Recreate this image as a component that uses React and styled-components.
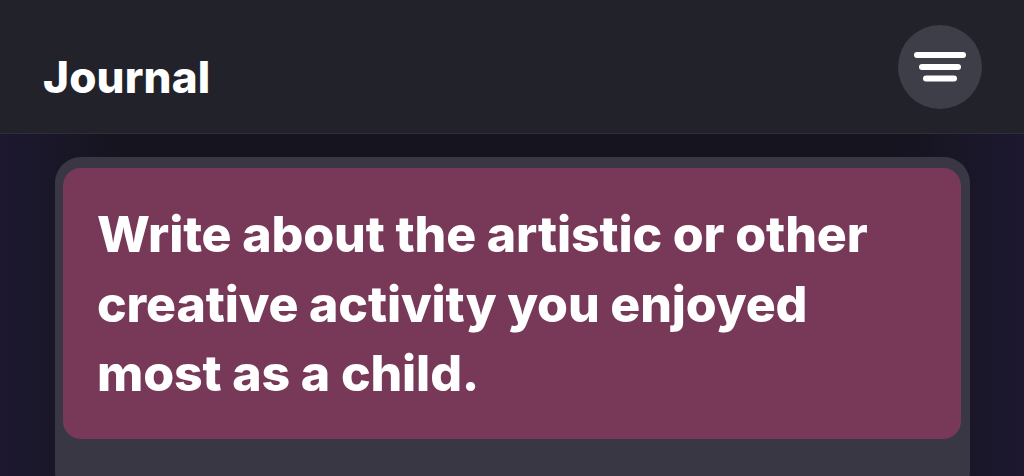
import React from 'react';
import styled, { createGlobalStyle } from 'styled-components';

const GlobalStyle = createGlobalStyle`
  html, body {
    margin: 0;
    padding: 0;
    height: 100%;
    background: #16141f;
    font-family: Inter, 'Noto Sans', 'Liberation Sans', sans-serif;
    -webkit-font-smoothing: antialiased;
  }
  #root {
    height: 100%;
  }
`;

const Screen = styled.div`
  height: 476px;
  overflow: hidden;
  display: flex;
  flex-direction: column;
  background: linear-gradient(
    90deg,
    #1d1830 0%,
    #16141f 12%,
    #16141f 88%,
    #1d1830 100%
  );
`;

const Header = styled.header`
  height: 134px;
  flex-shrink: 0;
  box-sizing: border-box;
  display: flex;
  align-items: center;
  justify-content: space-between;
  padding: 0 42px 0 43px;
  background: #22222b;
  border-bottom: 1px solid #2e2e39;
`;

const Title = styled.h1`
  margin: 0;
  color: #ffffff;
  font-size: 44px;
  font-weight: 800;
  letter-spacing: 0.2px;
  padding-top: 20px;
`;

const MenuButton = styled.button`
  width: 84px;
  height: 84px;
  border-radius: 50%;
  border: none;
  background: #3e3e49;
  display: flex;
  align-items: center;
  justify-content: center;
  padding: 0;
  cursor: pointer;
`;

const Body = styled.main`
  flex: 1;
  padding: 23px 54px 0 55px;
`;

const PromptCard = styled.section`
  background: #3a3745;
  border-radius: 26px;
  padding: 11px 9px 0 8px;
  height: 340px;
  box-sizing: border-box;
`;

const Prompt = styled.div`
  background: #783858;
  border-radius: 18px;
  height: 271px;
  box-sizing: border-box;
  padding: 32px 30px 0 34px;
`;

const PromptText = styled.p`
  margin: 0;
  max-width: 800px;
  color: #ffffff;
  font-size: 50px;
  font-weight: 800;
  line-height: 69.5px;
  letter-spacing: -0.15px;
`;

const FilterIcon = () => (
  <svg width="52" height="30" viewBox="0 0 52 30" fill="none">
    <g stroke="#ffffff" strokeWidth="6" strokeLinecap="round">
      <line x1="3" y1="3" x2="49" y2="3" />
      <line x1="8" y1="15" x2="44" y2="15" />
      <line x1="12" y1="26.5" x2="40" y2="26.5" />
    </g>
  </svg>
);

export default function App() {
  return (
    <>
      <GlobalStyle />
      <Screen>
        <Header>
          <Title>Journal</Title>
          <MenuButton aria-label="Filter">
            <FilterIcon />
          </MenuButton>
        </Header>
        <Body>
          <PromptCard>
            <Prompt>
              <PromptText>
                Write about the artistic or other creative activity you enjoyed
                most as a child.
              </PromptText>
            </Prompt>
          </PromptCard>
        </Body>
      </Screen>
    </>
  );
}
